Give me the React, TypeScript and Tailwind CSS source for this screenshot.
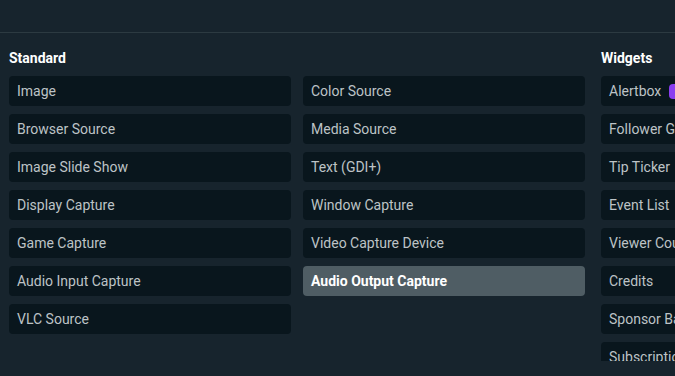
const standardLeft = [
  "Image",
  "Browser Source",
  "Image Slide Show",
  "Display Capture",
  "Game Capture",
  "Audio Input Capture",
  "VLC Source",
];

const standardRight = [
  "Color Source",
  "Media Source",
  "Text (GDI+)",
  "Window Capture",
  "Video Capture Device",
  "Audio Output Capture",
];

const widgets = [
  "Alertbox",
  "Follower Goal",
  "Tip Ticker",
  "Event List",
  "Viewer Count",
  "Credits",
  "Sponsor Banner",
  "Subscription Goal",
];

function SourceItem({ label, selected, badge }: { label: string; selected?: boolean; badge?: boolean }) {
  return (
    <div
      className={
        selected
          ? "h-[30px] shrink-0 flex items-center px-2 rounded bg-[#4f5d64] text-white font-bold text-[14px] whitespace-nowrap"
          : "h-[30px] shrink-0 flex items-center px-2 rounded bg-[#09161d] text-[#bdc3c6] text-[14px] whitespace-nowrap"
      }
    >
      {label}
      {badge && <span className="ml-2 w-4 h-[15px] rounded-sm bg-[#8a3ef0] shrink-0"></span>}
    </div>
  );
}

export default function App() {
  return (
    <div
      className="w-[675px] h-[376px] overflow-hidden bg-[#17242d]"
      style={{ fontFamily: "Roboto, 'Liberation Sans', sans-serif" }}
    >
      <div className="h-[33px] border-b border-[#2c3a41]"></div>
      <div className="flex gap-4 pl-[9px] pt-[15px]">
        {/* Standard */}
        <div className="w-[576px] shrink-0">
          <div className="text-white font-bold text-[14px] leading-5 mb-2">Standard</div>
          <div className="grid grid-cols-2 gap-x-3">
            <div className="flex flex-col gap-2">
              {standardLeft.map((s) => (
                <SourceItem key={s} label={s} />
              ))}
            </div>
            <div className="flex flex-col gap-2">
              {standardRight.map((s) => (
                <SourceItem key={s} label={s} selected={s === "Audio Output Capture"} />
              ))}
            </div>
          </div>
        </div>

        {/* Widgets */}
        <div className="w-[282px] shrink-0">
          <div className="text-white font-bold text-[14px] leading-5 mb-2">Widgets</div>
          <div className="h-[285px] overflow-hidden flex flex-col gap-2">
            {widgets.map((w) => (
              <SourceItem key={w} label={w} badge={w === "Alertbox"} />
            ))}
          </div>
        </div>
      </div>
    </div>
  );
}
